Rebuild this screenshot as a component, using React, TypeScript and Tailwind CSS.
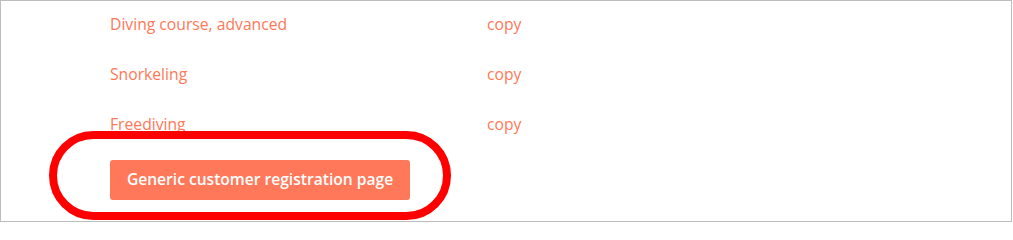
import React from 'react';

const rows = ['Diving course, advanced', 'Snorkeling', 'Freediving'];

export default function App() {
    return (
        <div className="w-[1013px] h-[223px] bg-white overflow-hidden" style={{ fontFamily: '"Open Sans", "Noto Sans", sans-serif' }}>
            <div className="relative w-[1012px] h-[222px] border border-[#bdbdbd]">
                <div className="pl-[109px] -mt-[1px]">
                    {rows.map((name) => (
                        <div key={name} className="h-[50px] flex items-center text-[15.7px] text-[#ff7857]">
                            <span className="w-[377px]">{name}</span>
                            <span>copy</span>
                        </div>
                    ))}
                    <button className="mt-[10px] w-[300px] h-[40px] rounded-[3px] bg-[#ff7859] text-white text-[15.6px] font-semibold">
                        Generic customer registration page
                    </button>
                </div>

                {/* annotation ring around the button */}
                <div className="absolute left-[48px] top-[130px] w-[402px] h-[89px] rounded-full border-[8px] border-[#ff0000] pointer-events-none" />
            </div>
        </div>
    );
}
